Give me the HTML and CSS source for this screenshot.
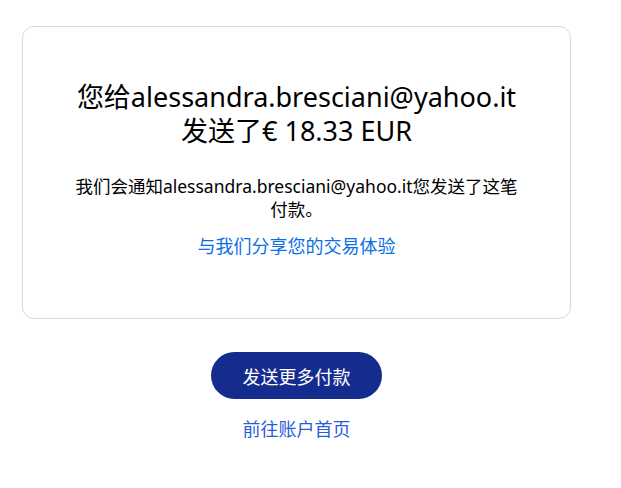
FILE: index.html
```html
<!DOCTYPE html>
<html lang="zh-CN">
<head>
<meta charset="utf-8">
<link rel="stylesheet" href="styles.css">
</head>
<body>
<div class="page">
  <section class="card">
    <h1 class="title">您给alessandra.bresciani@yahoo.it发送了€ 18.33 EUR</h1>
    <p class="note">我们会通知alessandra.bresciani@yahoo.it您发送了这笔付款。</p>
    <a class="link" href="#">与我们分享您的交易体验</a>
  </section>
  <div class="actions">
    <a class="btn" href="#">发送更多付款</a>
    <a class="link2" href="#">前往账户首页</a>
  </div>
</div>
</body>
</html>
```
FILE: styles.css
```css
html, body { margin: 0; padding: 0; background: #fff; }
body {
  font-family: "Noto Sans", "Noto Sans CJK SC", sans-serif;
  color: #000;
}
.page {
  width: 549px;
  padding: 26px 0 0 22px;
}
.card {
  box-sizing: border-box;
  height: 293px;
  border: 1px solid #dcd9d1;
  border-radius: 12px;
  padding: 53px 48px 0;
  display: flex;
  flex-direction: column;
  align-items: center;
  text-align: center;
}
.title {
  margin: 0;
  font-size: 27px;
  font-weight: 400;
  line-height: 34px;
}
.note {
  margin: 27px 0 0;
  font-size: 17.5px;
  line-height: 23px;
}
.link {
  margin-top: 14px;
  font-size: 18px;
  line-height: 23px;
  color: #0a6fe6;
  text-decoration: none;
}
.actions {
  display: flex;
  flex-direction: column;
  align-items: center;
  padding-top: 33px;
}
.btn {
  width: 171px;
  height: 47px;
  border-radius: 24px;
  background: #142c8e;
  color: #fff;
  font-size: 18px;
  display: flex;
  align-items: center;
  justify-content: center;
  text-decoration: none;
}
.link2 {
  margin-top: 19px;
  font-size: 18px;
  line-height: 23px;
  color: #2d5ad8;
  text-decoration: none;
}
```
